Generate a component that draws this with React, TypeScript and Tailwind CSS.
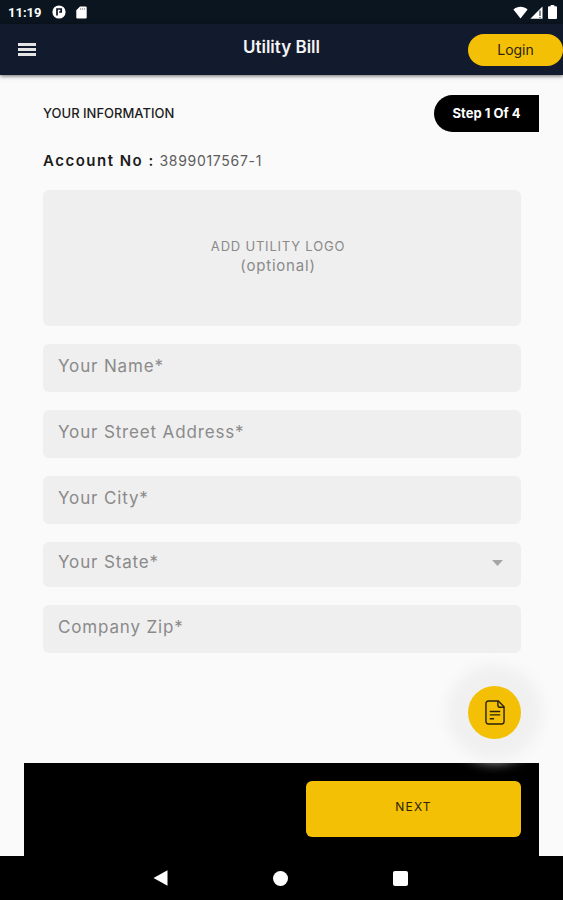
import React from "react";

const textFields = [
  { id: "name", label: "Your Name*" },
  { id: "street", label: "Your Street Address*" },
  { id: "city", label: "Your City*" },
];

const fieldClass =
  "block w-full h-12 rounded-md bg-[#efefef] px-[15px] pb-1 text-[17px] tracking-wider text-[#808080] placeholder:text-[#8a8a8a] outline-none";

const StatusBar = () => (
  <div className="flex h-6 items-center justify-between bg-[#0b151f] pl-2 pr-[6px] text-white">
    <div className="flex items-center gap-[10px]">
      <span className="font-[Roboto] text-[13px] font-bold leading-none">11:19</span>
      <svg className="h-[14px] w-[14px]" viewBox="0 0 14 14">
        <circle cx="7" cy="7" r="6.6" fill="#fff" />
        <path d="M5 10.500V4h4.200v3H7.200" fill="none" stroke="#0b151f" strokeWidth="1.7" />
      </svg>
      <svg className="h-[13px] w-[11px]" viewBox="0 0 11 13">
        <path d="M4 .5h5.5a1.2 1.2 0 0 1 1.2 1.2v9.6a1.2 1.2 0 0 1-1.2 1.2h-8A1.2 1.2 0 0 1 .3 11.300V4.300z" fill="#fff" />
        <path d="M4.600 2.200v1.500M6.600 2.200v1.500M8.600 2.200v1.500" stroke="#0b151f" strokeWidth=".5" />
      </svg>
    </div>
    <div className="flex items-center gap-[2px]">
      <svg className="h-[13px] w-[15px]" viewBox="0 0 15 13">
        <path d="M.4 3.500C4.500-.1 10.500-.1 14.600 3.500L7.500 12.500z" fill="#fff" />
      </svg>
      <svg className="h-[13px] w-[13px]" viewBox="0 0 13 13">
        <path d="M.3 12.700L12.500.5v12.200z" fill="#fff" />
        <path d="M10 4.500v5.500M10 11v1" stroke="#0b151f" strokeWidth="1" />
      </svg>
      <svg className="ml-[3px] h-[14px] w-[9px]" viewBox="0 0 9 14">
        <path d="M2.700 0h3.600v1.300H8a1 1 0 0 1 1 1V13a1 1 0 0 1-1 1H1a1 1 0 0 1-1-1V2.300a1 1 0 0 1 1-1h1.700z" fill="#fff" />
      </svg>
    </div>
  </div>
);

const AppBar = () => (
  <header className="grid h-[51px] grid-cols-3 items-center bg-[#111b2d] shadow-[0_1px_4px_rgba(0,0,0,0.6)]">
    <button aria-label="Menu" className="ml-[18px] flex w-[18px] flex-col gap-[2px]">
      <span className="h-[3px] w-full bg-[#e4e4e4]" />
      <span className="h-[3px] w-full bg-[#e4e4e4]" />
      <span className="h-[3px] w-full bg-[#e4e4e4]" />
    </button>
    <h1 className="pb-1 text-center text-[17px] font-semibold text-[#f4f4f4]">Utility Bill</h1>
    <button className="h-8 w-[95px] justify-self-end rounded-full bg-[#f3c005] text-[14px] text-[#2b2408]">
      Login
    </button>
  </header>
);

const NavBar = () => (
  <nav className="flex h-11 items-center justify-center gap-[105px] bg-black pr-1">
    <button aria-label="Back">
      <svg className="h-4 w-4" viewBox="0 0 16 16">
        <path d="M1.500 8L15.500.3v15.400z" fill="#fff" />
      </svg>
    </button>
    <button aria-label="Home" className="h-[15px] w-[15px] rounded-full bg-white" />
    <button aria-label="Recent" className="h-[15px] w-[15px] rounded-[2px] bg-white" />
  </nav>
);

const App = () => {
  return (
    <div className="flex min-h-screen flex-col bg-[#fafafa] font-[Inter,'Liberation_Sans',sans-serif]">
      <StatusBar />
      <AppBar />
      <main className="flex grow flex-col px-6 pt-5">
        <div className="flex items-center justify-between pl-[19px]">
          <h2 className="text-[13px] font-medium text-[#1c1c1c]">YOUR INFORMATION</h2>
          <div className="flex h-[37px] w-[105px] items-center justify-center rounded-l-full bg-black text-[13px] font-bold text-white">
            Step 1 Of 4
          </div>
        </div>
        <form id="bill" className="flex flex-col gap-[18px] pl-[19px] pr-[18px] pt-[18px]">
          <p className="text-[14px] leading-[22px] tracking-wider text-[#5c5c5c]">
            <span className="text-[15px] font-semibold tracking-widest text-[#1c1c1c]">Account No :</span> 3899017567-1
          </p>
          <button
            type="button"
            className="h-[136px] w-full rounded-md bg-[#efefef] pr-2 pb-1 leading-[19px] tracking-wider text-[#8a8a8a]"
          >
            <span className="block text-[13px]">ADD UTILITY LOGO</span>
            <span className="block text-[15px]">(optional)</span>
          </button>
          {textFields.map((field) => (
            <input
              key={field.id}
              id={field.id}
              type="text"
              aria-label={field.label}
              placeholder={field.label}
              className={fieldClass}
            />
          ))}
          <div className="relative">
            <select
              aria-label="Your State*"
              className="block h-[45px] w-full appearance-none rounded-md bg-[#efefef] px-[15px] pb-1 text-[17px] tracking-wider text-[#8a8a8a] outline-none"
            >
              <option>Your State*</option>
            </select>
            <svg className="pointer-events-none absolute right-[18px] top-[18px] h-[6px] w-[11px]" viewBox="0 0 11 6">
              <path d="M0 0h11L5.500 6z" fill="#a6a6a6" />
            </svg>
          </div>
          <input id="zip" type="text" aria-label="Company Zip*" placeholder="Company Zip*" className={fieldClass} />
        </form>
      </main>
      <div className="relative mx-6 flex justify-end bg-black px-[18px] pb-[19px] pt-[18px]">
        <button
          aria-label="Bills"
          className="absolute bottom-full right-[18px] mb-6 flex h-[53px] w-[53px] items-center justify-center rounded-full bg-[#f3c005] shadow-[0_0_14px_21px_#f0f0f0]"
        >
          <svg className="h-[25px] w-[20px]" viewBox="0 0 21 26" fill="none" stroke="#2b2408" strokeWidth="1.500">
            <path d="M3.500 1h10.500l6 6v15.500a2.500 2.500 0 0 1-2.500 2.500h-14A2.500 2.500 0 0 1 1 22.500v-19A2.500 2.500 0 0 1 3.500 1z" />
            <path d="M13.500 1v4a2.500 2.500 0 0 0 2.500 2.500h4" />
            <path d="M5 12h11M5 15.500h11M5 19.500h4.500" />
          </svg>
        </button>
        <button
          type="submit"
          form="bill"
          className="h-14 w-[215px] rounded-md bg-[#f3c005] pb-1 text-[12px] tracking-widest text-[#2b2408]"
        >
          NEXT
        </button>
      </div>
      <NavBar />
    </div>
  );
};

export default App;
